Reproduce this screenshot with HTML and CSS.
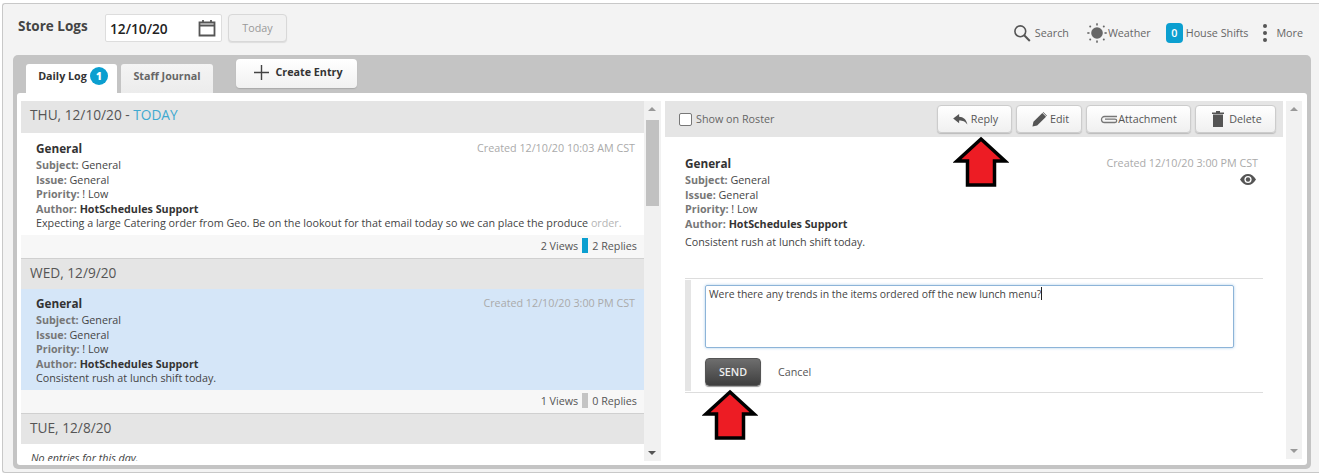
FILE: index.html
```html
<!DOCTYPE html>
<html lang="en">
<head>
<meta charset="utf-8">
<title>Store Logs</title>
<link rel="stylesheet" href="styles.css">
</head>
<body>
<div class="app">
  <header class="topbar">
    <h1 class="title">Store Logs</h1>
    <div class="date-field">
      <span>12/10/20</span>
      <svg class="cal" viewBox="0 0 18 18" width="18" height="18"><path d="M1.5 3.5h15v13h-15z M1.5 6.5h15" fill="none" stroke="#555" stroke-width="1.8"/><path d="M5 1v3M13 1v3" stroke="#555" stroke-width="1.8"/></svg>
    </div>
    <button class="btn-today">Today</button>
    <nav class="tools">
      <span class="tool tool-search"><svg viewBox="0 0 18 18" width="18" height="18"><circle cx="7.3" cy="7.3" r="5.4" fill="none" stroke="#555" stroke-width="1.6"/><path d="M11.2 11.2l5.6 5.8" stroke="#555" stroke-width="2"/></svg>Search</span>
      <span class="tool tool-weather"><svg viewBox="0 0 20 20" width="20" height="20"><circle cx="10" cy="10" r="5.8" fill="#666"/><g fill="#666"><rect x="9.2" y="0.3" width="1.6" height="2.2"/><rect x="9.2" y="17.5" width="1.6" height="2.2"/><rect x="0.3" y="9.2" width="2.2" height="1.6"/><rect x="17.5" y="9.2" width="2.2" height="1.6"/><circle cx="3.2" cy="3.4" r="1"/><circle cx="16.8" cy="3.4" r="1"/><circle cx="3.2" cy="16.6" r="1"/><circle cx="16.8" cy="16.6" r="1"/></g></svg>Weather</span>
      <span class="tool tool-shifts"><b class="count">0</b>House Shifts</span>
      <span class="tool tool-more"><span class="dots"><i></i><i></i><i></i></span>More</span>
    </nav>
  </header>

  <main class="panel">
    <div class="tabbar">
      <div class="tab tab-active">Daily Log <b class="tab-badge">1</b></div>
      <div class="tab">Staff Journal</div>
      <button class="btn-create"><svg viewBox="0 0 15 15" width="15" height="15"><path d="M7.5 0v15M0 7.5h15" stroke="#444" stroke-width="1.4"/></svg>Create Entry</button>
    </div>

    <div class="sheet">
      <section class="col-left">
        <div class="list">
          <div class="day">THU, 12/10/20 - <span class="today">TODAY</span></div>
          <article class="entry">
            <div class="entry-head"><strong class="name">General</strong><span class="created">Created 12/10/20 10:03 AM CST</span></div>
            <p class="meta"><b>Subject:</b> General</p>
            <p class="meta"><b>Issue:</b> General</p>
            <p class="meta"><b>Priority:</b> ! Low</p>
            <p class="meta"><b>Author:</b> <strong>HotSchedules Support</strong></p>
            <p class="meta fade">Expecting a large Catering order from Geo. Be on the lookout for that email today so we can place the produce <span class="faded">order.</span></p>
          </article>
          <div class="stats">2 Views <i class="sep sep-blue"></i> 2 Replies</div>
          <div class="day">WED, 12/9/20</div>
          <article class="entry entry-selected">
            <div class="entry-head"><strong class="name">General</strong><span class="created">Created 12/10/20 3:00 PM CST</span></div>
            <p class="meta"><b>Subject:</b> General</p>
            <p class="meta"><b>Issue:</b> General</p>
            <p class="meta"><b>Priority:</b> ! Low</p>
            <p class="meta"><b>Author:</b> <strong>HotSchedules Support</strong></p>
            <p class="meta">Consistent rush at lunch shift today.</p>
          </article>
          <div class="stats">1 Views <i class="sep"></i> 0 Replies</div>
          <div class="day">TUE, 12/8/20</div>
          <p class="none">No entries for this day.</p>
        </div>
        <div class="scroll">
          <i class="up"></i>
          <i class="thumb"></i>
          <i class="down"></i>
        </div>
      </section>

      <section class="col-right">
        <div class="detail">
          <div class="toolbar">
            <label class="roster"><i class="check"></i>Show on Roster</label>
            <div class="actions">
              <button class="btn btn-reply"><svg viewBox="0 0 16 12" width="15" height="11"><path d="M6.500 0L0 5l6.500 5V7c4 0 6.500.8 9 4.500C14.500 6 11 3 6.500 3z" fill="#555"/></svg>Reply</button>
              <button class="btn btn-edit"><svg viewBox="0 0 16 16" width="15" height="15"><path d="M0.500 15.500l1-5L11 1l4 4-9.500 9.500zM12 0l4 4-.5.500-4-4z" fill="#555"/></svg>Edit</button>
              <button class="btn btn-attach"><svg viewBox="0 0 18 9" width="18" height="9"><path d="M17 1.500H4.500a3 3 0 0 0 0 6H15a1.700 1.700 0 0 0 0-3.400H5" fill="none" stroke="#777" stroke-width="1.300"/></svg>Attachment</button>
              <button class="btn btn-delete"><svg viewBox="0 0 12 16" width="12" height="16"><path d="M1 3.500h10V16H1zM0 1.500h12V3H0zM4 0h4v1.500H4z" fill="#555"/></svg>Delete</button>
            </div>
          </div>
          <div class="post">
            <div class="entry-head"><strong class="name">General</strong><span class="created">Created 12/10/20 3:00 PM CST</span></div>
            <svg class="eye" viewBox="0 0 16 11" width="16" height="11"><path d="M0 5.500C2.500 1.500 5 0 8 0s5.500 1.500 8 5.500C13.500 9.500 11 11 8 11S2.500 9.500 0 5.500z" fill="#555"/><circle cx="8" cy="5.500" r="3.600" fill="#fff"/><circle cx="8" cy="5.500" r="2.200" fill="#555"/></svg>
            <p class="meta"><b>Subject:</b> General</p>
            <p class="meta"><b>Issue:</b> General</p>
            <p class="meta"><b>Priority:</b> ! Low</p>
            <p class="meta"><b>Author:</b> <strong>HotSchedules Support</strong></p>
            <p class="meta post-body">Consistent rush at lunch shift today.</p>
          </div>
          <div class="reply">
            <div class="reply-inner">
              <div class="textarea">Were there any trends in the items ordered off the new lunch menu?<i class="caret"></i></div>
              <div class="reply-actions">
                <button class="btn-send">SEND</button>
                <span class="cancel">Cancel</span>
              </div>
            </div>
          </div>
        </div>
        <div class="scroll scroll-right">
          <i class="up"></i>
          <i class="down"></i>
        </div>
      </section>
    </div>
  </main>
</div>

<svg class="arrow arrow-reply" viewBox="0 0 56 52" width="56" height="52"><path d="M28 3L52 25H41.500V49H14.500V25H4z" fill="#ed1c24" stroke="#000" stroke-width="3.500"/></svg>
<svg class="arrow arrow-send" viewBox="0 0 56 52" width="56" height="52"><path d="M28 3L52 25H41.500V49H14.500V25H4z" fill="#ed1c24" stroke="#000" stroke-width="3.500"/></svg>
</body>
</html>
```

FILE: styles.css
```css
* { box-sizing: border-box; }
html, body { margin: 0; padding: 0; background: #fff; }
body {
  font-family: "Open Sans", "DejaVu Sans", sans-serif;
  font-size: 10.750px;
  color: #444;
  height: 474px;
  overflow: hidden;
  position: relative;
}
p { margin: 0; }
button { font-family: inherit; cursor: pointer; }

.app {
  margin: 3px 0 0 2px;
  height: 470px;
  border: 1px solid #c8c8c8;
  border-right: 0;
  border-radius: 3px 0 0 3px;
  background: #f3f3f3;
  padding-left: 10px;
  padding-right: 8px;
}

.topbar { height: 51px; display: flex; align-items: flex-start; padding-left: 4px; }
.title { margin: 12px 0 0 1px; width: 87px; font-size: 13.500px; font-weight: 700; line-height: 20px; color: #444; }
.date-field {
  margin-top: 10px; width: 117px; height: 28px;
  display: flex; align-items: center; justify-content: space-between;
  padding: 0 5px 0 4px;
  background: #fff; border: 1px solid #ddd; border-radius: 2px;
  font-size: 13.700px; font-weight: 600; color: #222;
}
.cal { flex: none; margin-top: -1px; }
.btn-today {
  margin: 10px 0 0 6px; width: 59px; height: 28px; padding: 0;
  background: #f1f1f1; border: 1px solid #d8d8d8; border-radius: 4px;
  box-shadow: 0 1px 1px #ddd; color: #999; font-size: 10.750px;
}
.tools { margin-left: auto; margin-top: 19px; display: flex; align-items: center; height: 20px; color: #666; font-size: 10.750px; padding-right: 8px; }
.tool { display: flex; align-items: center; white-space: nowrap; }
.tool-search svg { margin-right: 4px; }
.tool-weather { margin-left: 18px; }
.tool-weather svg { margin-right: 1px; }
.tool-shifts { margin-left: 15px; }
.count { width: 17px; height: 20px; margin-right: 3px; background: #0b9fd0; border-radius: 4px; color: #fff; font-weight: 600; text-align: center; line-height: 20px; }
.tool-more { margin-left: 15px; }
.dots { display: flex; flex-direction: column; gap: 3px; margin-right: 9px; }
.dots i { width: 4px; height: 4px; border-radius: 50%; background: #555; }

.panel { width: 1298px; height: 414px; background: #c4c4c4; border-radius: 5px; padding: 4px 4px 4px 4px; }
.tabbar { height: 34px; display: flex; align-items: flex-end; padding-left: 9px; }
.tab {
  width: 92px; height: 29px; margin-right: 4px; padding-bottom: 5px;
  display: flex; align-items: center; justify-content: center;
  background: linear-gradient(#f4f4f4, #ececec);
  border-radius: 3px 3px 0 0;
  font-weight: 700; color: #666; font-size: 10.750px;
}
.tab-active { width: 91px; background: #fff; color: #333; padding-left: 3px; }
.tab-badge { width: 18px; height: 18px; margin-left: 3px; border-radius: 50%; background: #0b9fd0; color: #fff; font-size: 10px; text-align: center; line-height: 18px; }
.btn-create {
  align-self: flex-start; width: 121px; height: 29px; margin: 0 0 0 19px;
  display: flex; align-items: center; justify-content: center; gap: 6px;
  background: linear-gradient(#fff, #f1f1f1);
  border: 0; border-radius: 4px; box-shadow: 0 1px 1px #aaa;
  font-weight: 700; font-size: 10.750px; color: #333; padding: 0 0 3px 4px;
}

.sheet { height: 372px; background: #fff; border-radius: 3px; display: flex; padding: 8px 0 4px 4px; }
.col-left { width: 644px; display: flex; }
.list { width: 624px; overflow: hidden; }
.col-right { width: 637px; display: flex; }
.detail { width: 618px; }

.scroll { width: 17px; margin-left: -1px; position: relative; background: #f1f1f1; height: 360px; }
.scroll-right { width: 16px; margin-left: 3px; height: 358px; }
.up, .down { position: absolute; left: 4px; width: 0; height: 0; border-left: 4px solid transparent; border-right: 4px solid transparent; }
.up { top: 6px; border-bottom: 4px solid #999; }
.down { bottom: 6px; border-top: 4px solid #555; }
.scroll-right .down { border-top-color: #999; }
.thumb { position: absolute; top: 19px; left: 2px; width: 13px; height: 86px; background: #c1c1c1; }

.day { height: 32px; padding-left: 9px; background: #e5e5e5; font-size: 13.700px; line-height: 28px; color: #555; }
.stats + .day { height: 30px; }
.today { color: #3fa9d0; }
.entry { height: 102px; padding: 6px 10px 0 15px; }
.entry-selected { height: 101px; background: #d5e6f8; padding-top: 5px; }
.entry-head { display: flex; justify-content: space-between; align-items: center; height: 18px; }
.entry .entry-head { margin-bottom: 1px; }
.name { font-size: 11.750px; font-weight: 700; color: #333; }
.created { font-size: 10.750px; color: #aaa; }
.meta { font-size: 10.750px; line-height: 14.600px; color: #444; white-space: nowrap; }
.meta b { font-weight: 700; color: #777; }
.meta strong { font-weight: 700; color: #333; }
.faded { color: #b5b5b5; }
.stats {
  height: 24px; background: #f7f7f7; border-bottom: 1px solid #d0d0d0;
  display: flex; align-items: center; justify-content: flex-end; gap: 4px;
  padding: 0 8px 2px 0; font-size: 10.750px; color: #555;
}
.sep { width: 6px; height: 15px; background: #c4c4c4; }
.sep-blue { background: #0b9fd0; }
.none { margin: 7px 0 0 10px; font-style: italic; font-size: 10.750px; line-height: 15px; color: #444; }

.toolbar { height: 36px; background: #e5e5e5; display: flex; align-items: center; justify-content: space-between; padding: 0 7px 0 14px; }
.roster { display: flex; align-items: center; color: #666; font-size: 10.750px; gap: 4px; }
.check { width: 13px; height: 13px; background: #fff; border: 1px solid #777; border-radius: 2px; }
.actions { display: flex; gap: 4px; }
.btn {
  height: 28px; padding: 0;
  display: flex; align-items: center; justify-content: center;
  background: linear-gradient(#fff, #f0f0f0);
  border: 1px solid #ccc; border-radius: 4px; box-shadow: 0 1px 1px #bbb;
  font-size: 10.750px; color: #555;
}
.btn-reply { width: 75px; gap: 3px; padding-left: 2px; }
.btn-edit { width: 66px; gap: 3px; padding-left: 3px; }
.btn-attach { width: 105px; gap: 0; }
.btn-delete { width: 81px; gap: 5px; padding-left: 3px; }

.post { position: relative; height: 141px; padding: 17px 25px 0 20px; }
.post .entry-head { margin-bottom: 1px; }
.eye { position: absolute; right: 27px; top: 37px; }
.post-body { margin-top: 4px; }

.reply { margin: 0 20px; border-top: 1px solid #ddd; border-bottom: 1px solid #ddd; height: 115px; padding-top: 1px; width: 578px; }
.reply-inner { height: 111px; border-left: 6px solid #e5e5e5; padding: 5px 0 0 14px; }
.textarea {
  width: 529px; height: 63px; padding: 1px 2px 2px 3px;
  border: 1px solid #8db4d8; border-radius: 2px; box-shadow: 0 0 3px #a9cbe8;
  color: #444; font-size: 10.400px; line-height: 15px;
}
.caret { display: inline-block; width: 1px; height: 13px; background: #222; vertical-align: -2px; }
.reply-actions { display: flex; align-items: center; margin-top: 10px; }
.btn-send {
  width: 56px; height: 28px; padding: 0;
  background: linear-gradient(#6e6e6e, #3f3f3f);
  border: 1px solid #555; border-radius: 4px; box-shadow: 0 1px 1px #999;
  color: #eee; font-size: 10.750px; font-weight: 600;
}
.cancel { margin: -1px 0 0 17px; color: #555; font-size: 10.750px; }

.arrow { position: absolute; }
.arrow-reply { left: 953px; top: 136px; }
.arrow-send { left: 702px; top: 389px; }
```
